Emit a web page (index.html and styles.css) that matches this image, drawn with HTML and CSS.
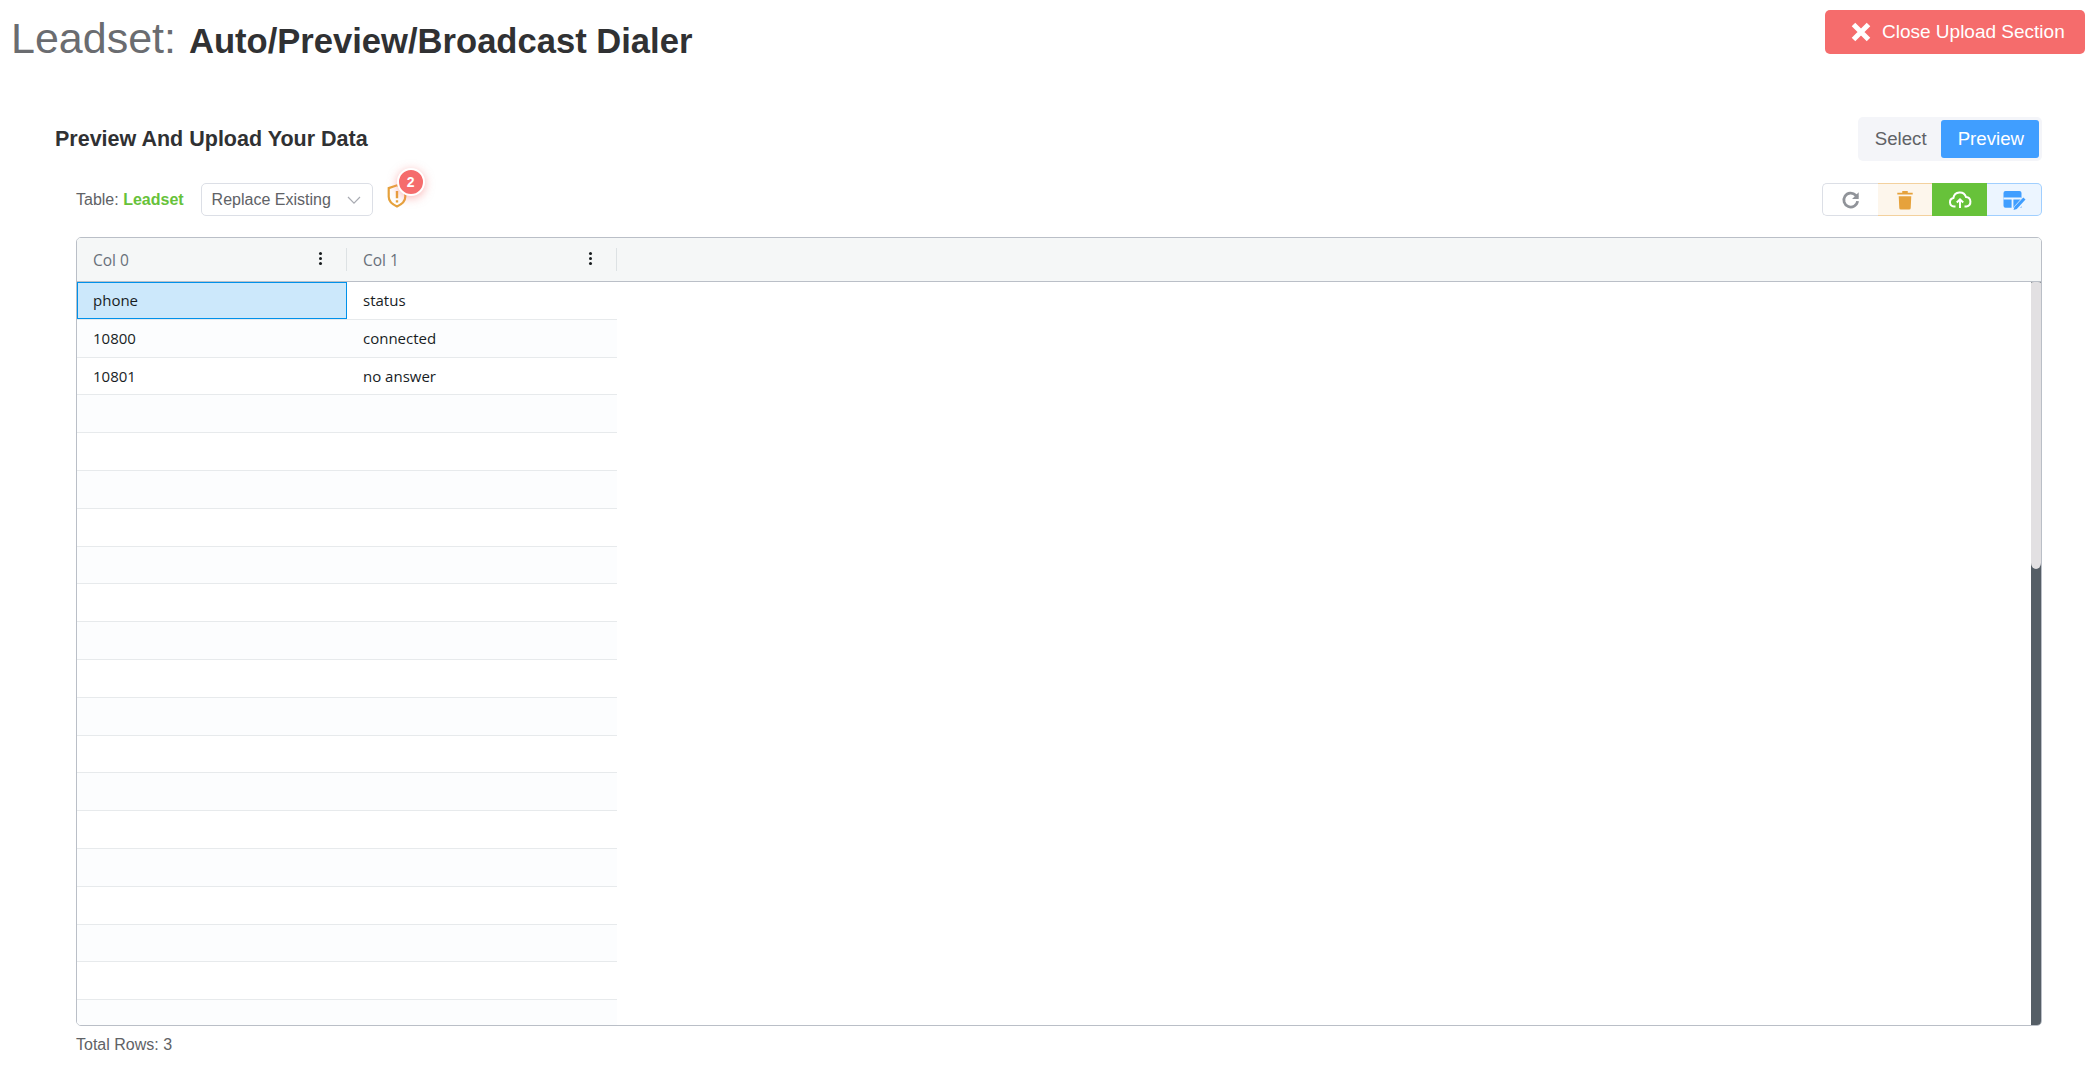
FILE: index.html
```html
<!DOCTYPE html>
<html>
<head>
  <title>Leadset</title>
  <link rel="stylesheet" href="styles.css">
</head>
<body>
  <div class="page-header">
    <h1 class="page-title"><span class="page-title-label">Leadset:</span> <strong>Auto/Preview/Broadcast Dialer</strong></h1>
    <button class="btn-close">
      <svg class="btn-close-icon" viewBox="0 0 20 20"><path d="M2.500 2.500l15 15M17.500 2.500l-15 15"/></svg>
      Close Upload Section
    </button>
  </div>

  <div class="upload">
    <div class="upload-head">
      <h2>Preview And Upload Your Data</h2>
      <div class="steps">
        <span class="step">Select</span>
        <span class="step active">Preview</span>
      </div>
    </div>

    <div class="toolbar">
      <div class="toolbar-left">
        <span class="table-name">Table: <b>Leadset</b></span>
        <div class="select">
          <span>Replace Existing</span>
          <svg viewBox="0 0 16 16"><path d="M2 5l6 6.200L14 5"/></svg>
        </div>
        <div class="warn">
          <svg viewBox="1 1 18 22"><path class="shield" d="M10 2.200l7.600 2.600v8c0 4-3.400 7-7.600 8.800-4.200-1.800-7.600-4.800-7.600-8.800v-8z"/><path class="mark" d="M10 7.500v6.500M10 15.800v2.200"/></svg>
          <span class="badge">2</span>
        </div>
      </div>
      <div class="actions">
        <button class="act act-plain">
          <svg viewBox="0 0 20 20"><path class="line line-thick" d="M16 11a6.300 6.300 0 1 1-1.700-5.300L16 7.400"/><path class="solid" d="M17 3v6h-6z"/></svg>
        </button>
        <button class="act act-warn">
          <svg viewBox="0 0 20 20"><path class="solid" d="M3 3.500h14v1.500h-14zM7.500 1.800h5v1.700h-5zM4.300 6.500h11.400l-.5 10.700a1.500 1.500 0 0 1-1.500 1.500h-7.400a1.500 1.500 0 0 1-1.500-1.500z"/></svg>
        </button>
        <button class="act act-ok">
          <svg viewBox="0 0 24 20"><path class="line" d="M7.500 16.500h-1.500a4.300 4.300 0 0 1-.6-8.500 6.500 6.500 0 0 1 12.600-1 4.800 4.800 0 0 1 .5 9.500h-2"/><path class="line" d="M12 18v-8M8.800 12.500l3.200-3.200 3.200 3.200"/></svg>
        </button>
        <button class="act act-info">
          <svg viewBox="0 0 24 22"><path class="solid" d="M3.500 2h14a2 2 0 0 1 2 2v14.700h-16a2 2 0 0 1-2-2v-12.700a2 2 0 0 1 2-2z"/><path class="cut" d="M1.500 9.500h18M10.500 9.500v9.500"/><path class="gap" d="M23 9.500l-9.500 10.500"/><path class="solid" d="M21.300 8.500l2.200 2-8.700 9.600-3.300 1 1-3.300z"/></svg>
        </button>
      </div>
    </div>

    <div class="grid">
      <div class="grid-head">
        <div class="grid-col"><span>Col 0</span><i class="dots"></i></div>
        <div class="grid-col"><span>Col 1</span><i class="dots"></i></div>
      </div>
      <div class="grid-main">
        <div class="grid-body">
          <div class="row"><div class="cell selected">phone</div><div class="cell">status</div></div>
          <div class="row"><div class="cell">10800</div><div class="cell">connected</div></div>
          <div class="row"><div class="cell">10801</div><div class="cell">no answer</div></div>
          <div class="row"></div><div class="row"></div><div class="row"></div><div class="row"></div>
          <div class="row"></div><div class="row"></div><div class="row"></div><div class="row"></div>
          <div class="row"></div><div class="row"></div><div class="row"></div><div class="row"></div>
          <div class="row"></div><div class="row"></div><div class="row"></div><div class="row"></div>
          <div class="row"></div>
        </div>
        <div class="scrollbar"><div class="scrollbar-thumb"></div></div>
      </div>
    </div>

    <div class="total">Total Rows: 3</div>
  </div>
</body>
</html>
```

FILE: styles.css
```css
:root {
  --danger: #f56c6c;
  --primary: #409eff;
  --success: #67c23a;
  --warning: #e6a23c;
  --text: #303133;
  --text-light: #606266;
  --border: #dcdfe6;
}

* {
  box-sizing: border-box;
}

html, body {
  height: 100%;
  overflow: hidden;
}

body {
  margin: 0;
  background: #fff;
  color: var(--text);
  font-family: 'Liberation Sans', Arial, sans-serif;
}

button {
  font-family: inherit;
  cursor: pointer;
}

.page-header {
  display: flex;
  justify-content: space-between;
  align-items: flex-start;
  padding: 10px 9px 0 11px;
  height: 117px;
}

.page-title {
  margin: 0;
  font-size: 43px;
  font-weight: 400;
  line-height: 56px;
  color: #6a6c70;
}

.page-title strong {
  font-size: 34.600px;
  font-weight: 700;
  color: var(--text);
  margin-left: 1px;
}

.btn-close {
  display: flex;
  align-items: center;
  gap: 11px;
  width: 260px;
  height: 44px;
  padding: 0 0 0 26px;
  border: 0;
  border-radius: 5px;
  background: var(--danger);
  color: #fff;
  font-size: 19px;
}

.btn-close-icon {
  width: 20px;
  height: 20px;
  fill: none;
  stroke: #fff;
  stroke-width: 5;
}

.upload {
  padding: 0 52px 0 55px;
}

.upload-head {
  display: flex;
  justify-content: space-between;
  align-items: center;
  height: 44px;
}

.upload-head h2 {
  margin: 0;
  font-size: 21.500px;
  font-weight: 700;
  color: var(--text);
}

.steps {
  display: flex;
  padding: 3px;
  border-radius: 5px;
  background: #f4f5f9;
  font-size: 18.670px;
}

.step {
  padding: 0 14px;
  line-height: 38px;
  color: var(--text-light);
}

.step.active {
  padding: 0 15px 0 17px;
  border-radius: 3px;
  background: var(--primary);
  color: #fff;
}

.toolbar {
  display: flex;
  justify-content: space-between;
  align-items: center;
  height: 33px;
  margin-top: 22px;
  padding-left: 21px;
}

.toolbar-left {
  display: flex;
  align-items: center;
}

.table-name {
  font-size: 16px;
  color: var(--text-light);
}

.table-name b {
  color: var(--success);
}

.select {
  display: flex;
  align-items: center;
  justify-content: space-between;
  width: 172px;
  height: 33px;
  margin-left: 17px;
  padding: 0 10px;
  border: 1px solid var(--border);
  border-radius: 5px;
  font-size: 16px;
  color: var(--text-light);
}

.select svg {
  width: 16px;
  height: 16px;
  fill: none;
  stroke: #a8abb2;
  stroke-width: 1.200;
}

.warn {
  position: relative;
  width: 20px;
  height: 24px;
  margin: -7px 0 0 14px;
}

.warn svg {
  display: block;
  width: 20px;
  height: 24px;
  fill: none;
  stroke: var(--warning);
}

.warn .shield {
  stroke-width: 2;
}

.warn .mark {
  stroke-width: 2.200;
}

.badge {
  position: absolute;
  top: -16px;
  left: 10px;
  width: 28px;
  height: 28px;
  border: 2px solid #fff;
  border-radius: 50%;
  background: var(--danger);
  color: #fff;
  font-size: 14px;
  font-weight: 700;
  line-height: 24px;
  text-align: center;
  box-shadow: 0 2px 10px rgba(245, 108, 108, 0.5);
}

.actions {
  display: flex;
}

.act {
  display: flex;
  align-items: center;
  justify-content: center;
  height: 33px;
  padding: 0;
  border: 1px solid;
}

.act svg {
  width: 24px;
  height: 22px;
}

.act .line {
  fill: none;
  stroke: currentColor;
  stroke-width: 2;
}

.act .line-thick {
  stroke-width: 2.500;
}

.act .solid {
  fill: currentColor;
}

.act .cut {
  fill: none;
  stroke: #ecf5ff;
  stroke-width: 1.800;
}

.act .gap {
  fill: none;
  stroke: #ecf5ff;
  stroke-width: 5.500;
}

.act-plain {
  width: 56px;
  border-color: var(--border);
  border-right: 0;
  border-radius: 5px 0 0 5px;
  background: #fff;
  color: #909399;
}

.act-warn {
  width: 54px;
  border-color: #f3d19e;
  border-left: 0;
  border-right: 0;
  background: #fdf6ec;
  color: var(--warning);
}

.act-ok {
  width: 55px;
  border-color: var(--success);
  background: var(--success);
  color: #fff;
}

.act-info {
  width: 55px;
  border-color: #a0cfff;
  border-left: 0;
  border-radius: 0 5px 5px 0;
  background: #ecf5ff;
  color: var(--primary);
}

.grid {
  display: flex;
  flex-direction: column;
  height: 789px;
  margin: 21px 0 0 21px;
  border: 1px solid #babfc7;
  border-radius: 5px;
  overflow: hidden;
  font-family: 'Open Sans', sans-serif;
  font-size: 15px;
}

.grid-head {
  display: flex;
  flex: none;
  height: 44px;
  background: #f5f7f7;
  border-bottom: 1px solid #babfc7;
}

.grid-col {
  display: flex;
  align-items: center;
  justify-content: space-between;
  position: relative;
  width: 270px;
  padding: 0 25px 0 16px;
  font-size: 15.500px;
  color: #68707a;
}

.grid-col::after {
  content: "";
  position: absolute;
  top: 10px;
  right: 0;
  width: 1px;
  height: 23px;
  background: #dde2e4;
}

.dots {
  width: 3px;
  height: 3px;
  margin-top: -2px;
  border-radius: 50%;
  background: #181d1f;
  box-shadow: 0 -5px 0 #181d1f, 0 5px 0 #181d1f;
}

.grid-main {
  display: flex;
  flex: 1;
  min-height: 0;
}

.grid-body {
  flex: 1;
  overflow: hidden;
}

.row {
  display: flex;
  width: 540px;
  height: 37.800px;
  border-bottom: 1px solid #e7eaec;
  background: #fff;
}

.row:nth-child(even) {
  background: #fcfdfe;
}

.cell {
  width: 270px;
  padding: 0 16px;
  line-height: 36px;
  color: #181d1f;
}

.cell.selected {
  border: 1px solid #0091ea;
  padding: 0 15px;
  line-height: 34px;
  background: #cce8fb;
}

.scrollbar {
  flex: none;
  width: 10px;
  background: #555e66;
}

.scrollbar-thumb {
  height: 287px;
  border-radius: 3px 3px 5px 5px / 1px 1px 6px 6px;
  background: #e2e0e2;
}

.total {
  margin: 10px 0 0 21px;
  font-size: 16px;
  color: var(--text-light);
}
```
